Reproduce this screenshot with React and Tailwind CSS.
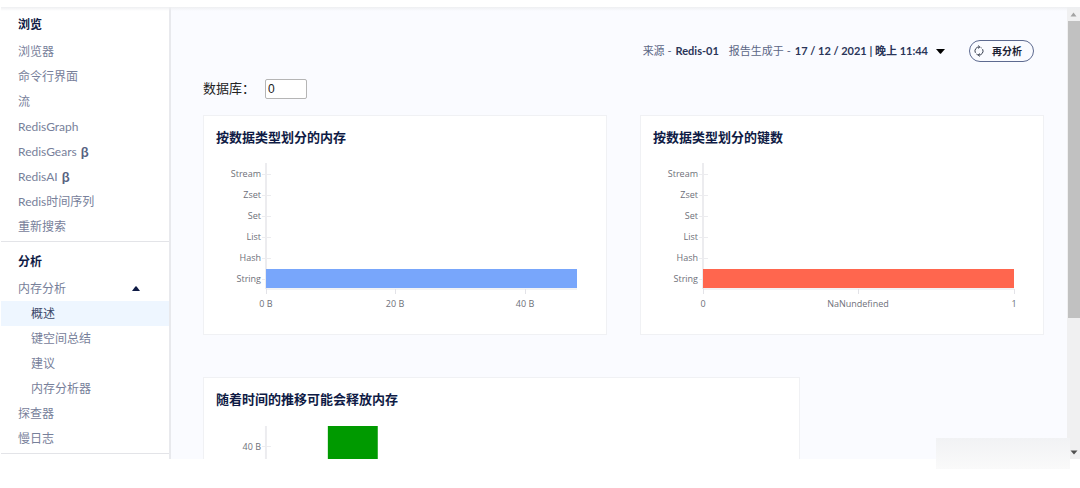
import React, { useState } from 'react';

const browseLinks = [
  { label: '浏览器' },
  { label: '命令行界面' },
  { label: '流' },
  { label: 'RedisGraph' },
  { label: 'RedisGears', beta: true },
  { label: 'RedisAI', beta: true },
  { label: 'Redis时间序列' },
  { label: '重新搜索' },
];

const memoryLinks = [
  { label: '概述', active: true },
  { label: '键空间总结' },
  { label: '建议' },
  { label: '内存分析器' },
];

const dataTypes = ['Stream', 'Zset', 'Set', 'List', 'Hash', 'String'];

const NavLink = ({ label, beta, active, nested }) => (
  <li>
    <a
      href="#"
      className={`flex h-[25px] items-center gap-1 ${nested ? 'pl-[30px]' : 'pl-[17px]'} ${
        active ? 'bg-[#eef6ff] text-[#3a4769]' : 'text-[#77809a]'
      }`}
    >
      {label}
      {beta && <b className="text-sm leading-none text-[#56617f]">β</b>}
    </a>
  </li>
);

const NavSection = ({ title, children }) => (
  <section className="border-b border-[#e3e4e8] pt-[5px] pb-0.5">
    <h2 className="mb-0.5 flex h-[25px] items-center pl-[17px] font-bold text-[#0f1b45]">{title}</h2>
    <ul>{children}</ul>
  </section>
);

const Sidebar = () => {
  const [open, setOpen] = useState(true);

  return (
    <nav className="w-[170px] shrink-0 space-y-0.5 overflow-hidden border-r-2 border-[#e8e9ed] bg-white text-xs">
      <NavSection title="浏览">
        {browseLinks.map((link) => (
          <NavLink key={link.label} {...link} />
        ))}
      </NavSection>
      <NavSection title="分析">
        <li>
          <button
            type="button"
            aria-expanded={open}
            onClick={() => setOpen(!open)}
            className="flex h-[25px] w-full items-center justify-between pr-[29px] pl-[17px] text-[#77809a]"
          >
            内存分析
            <svg viewBox="0 0 8 5" className={`h-[5px] w-2 ${open ? '' : 'rotate-180'}`} fill="#0f1b45">
              <path d="M0 5 L3.4 0.4 Q4 0 4.6 0.4 L8 5 Z" />
            </svg>
          </button>
        </li>
        {open && memoryLinks.map((link) => <NavLink key={link.label} {...link} nested />)}
        <NavLink label="探查器" />
        <NavLink label="慢日志" />
      </NavSection>
    </nav>
  );
};

const Card = ({ title, className, children }) => (
  <section className={`border border-[#f0f1f4] bg-white px-3 ${className}`}>
    <h3 className="mt-[11px] mb-4 text-[13px] leading-5 font-bold text-[#0f1b45]">{title}</h3>
    {children}
  </section>
);

const BarChart = ({ color, ticks }) => (
  <svg
    viewBox="0 0 378 171"
    className="block w-full font-['Open_Sans','Noto_Sans_CJK_SC',sans-serif] text-[9px]"
    fill="#6e7079"
  >
    <path d="M50 0 V126" stroke="#ececef" strokeWidth="2" />
    <path d="M50 126 H361" stroke="#e6e6ea" strokeWidth="1" />
    {dataTypes.map((type, i) => (
      <g key={type}>
        <path d={`M46 ${11.5 + i * 21} H55`} stroke="#ececef" />
        <text x="45" y={14 + i * 21} textAnchor="end">
          {type}
        </text>
      </g>
    ))}
    <rect x="50" y="106" width="311" height="19" fill={color} />
    {ticks.map((tick) => (
      <g key={tick.label}>
        <path d={`M${tick.x + 0.5} 126 V131`} stroke="#e3e3e8" />
        <text x={tick.x} y="144" textAnchor="middle">
          {tick.label}
        </text>
      </g>
    ))}
  </svg>
);

const FreedMemoryChart = () => (
  <svg
    viewBox="0 0 572 172"
    className="block w-full font-['Open_Sans','Noto_Sans_CJK_SC',sans-serif] text-[9px]"
    fill="#6e7079"
  >
    <path d="M50 1 V150" stroke="#ececef" strokeWidth="2" />
    <path d="M46 21.5 H55" stroke="#ececef" />
    <text x="45" y="25" textAnchor="end">
      40 B
    </text>
    <rect x="112" y="1" width="50" height="149" fill="#009a00" />
  </svg>
);

const ReportBar = () => (
  <header className="flex items-center justify-end pr-2.5 text-[11px] text-[#5b6685]">
    <p className="flex gap-1">
      来源 - <b className="text-[#2a3558]">Redis-01</b>
    </p>
    <p className="ml-2.5">报告生成于 -</p>
    <button type="button" aria-haspopup="listbox" className="ml-1 flex items-center gap-2 font-bold text-[#2a3558]">
      17 / 12 / 2021 | 晚上 11:44
      <svg viewBox="0 0 9 5" className="h-[5px] w-[9px]" fill="#000">
        <path d="M0 0 H9 L5.1 4.6 Q4.5 5 3.9 4.6 Z" />
      </svg>
    </button>
    <button
      type="button"
      className="ml-6 flex h-[22px] items-center gap-2 rounded-full border border-[#5d6a90] pr-[11px] pl-1 text-[10px] font-bold text-[#1c2233]"
    >
      <svg viewBox="0 0 10 12" className="h-3 w-2.5" fill="none" stroke="#333a4a" strokeWidth="1">
        <path d="M5.4 2 A4 4 0 0 0 1.4 7.8" />
        <path d="M2.4 9 A4 4 0 0 0 4.6 10" />
        <path d="M4.6 10 A4 4 0 0 0 8.6 4.2" />
        <path d="M7.6 3 A4 4 0 0 0 6.6 2.4" />
        <path d="M4.2 0.6 L5.8 2 L4.2 3.4 M5.8 8.6 L4.2 10 L5.8 11.4" />
      </svg>
      再分析
    </button>
  </header>
);

const Scrollbar = () => (
  <div aria-hidden="true" className="flex w-[13px] shrink-0 flex-col items-center bg-[#f0f0f1]">
    <svg viewBox="0 0 13 14" className="h-3.5 w-full shrink-0" fill="#a3a3a3">
      <path d="M3.5 9.5 L6.5 5.5 L9.5 9.5 Z" />
    </svg>
    <div className="ml-px w-3 grow-[7] bg-[#c1c1c1]" />
    <div className="grow-3" />
    <svg viewBox="0 0 13 14" className="h-3.5 w-full shrink-0" fill="#505050">
      <path d="M3.5 5.5 H10.5 L7 9.5 Z" />
    </svg>
  </div>
);

const App = () => {
  const [database, setDatabase] = useState('0');

  return (
    <div className="relative flex h-screen flex-col overflow-hidden bg-white pt-[7px] pb-[29px] pl-px font-['Lato','Noto_Sans_CJK_SC',sans-serif]">
      <div className="relative flex min-h-0 flex-1">
        <div className="absolute inset-x-0 top-0 h-1 bg-linear-to-b from-[#eeeff1] to-transparent" />
        <Sidebar />
        <main className="min-w-0 flex-1 overflow-hidden bg-[#fafbff] pt-[33px] pr-[23px] pl-8">
          <ReportBar />
          <div className="mt-[17px] flex h-5 items-center gap-2.5">
            <label htmlFor="database" className="text-[13px] text-[#222]">
              数据库：
            </label>
            <input
              id="database"
              type="text"
              value={database}
              onChange={(e) => setDatabase(e.target.value)}
              className="h-5 w-[42px] rounded-xs border border-[#b5b5b5] bg-white px-0.5 font-['Liberation_Sans',sans-serif] text-xs text-[#222]"
            />
          </div>
          <div className="mt-4 flex gap-[33px]">
            <Card title="按数据类型划分的内存" className="flex-1">
              <BarChart
                color="#78a6fb"
                ticks={[
                  { x: 50, label: '0 B' },
                  { x: 179, label: '20 B' },
                  { x: 309, label: '40 B' },
                ]}
              />
            </Card>
            <Card title="按数据类型划分的键数" className="flex-1">
              <BarChart
                color="#ff664e"
                ticks={[
                  { x: 50, label: '0' },
                  { x: 205, label: 'NaNundefined' },
                  { x: 361, label: '1' },
                ]}
              />
            </Card>
          </div>
          <Card title="随着时间的推移可能会释放内存" className="mt-[42px] w-[71%]">
            <FreedMemoryChart />
          </Card>
        </main>
        <Scrollbar />
      </div>
      <div className="absolute right-2.5 bottom-[19px] h-[31px] w-[134px] bg-linear-to-b from-[#f1f2f4] to-[#fafafa]" />
    </div>
  );
};

export default App;
